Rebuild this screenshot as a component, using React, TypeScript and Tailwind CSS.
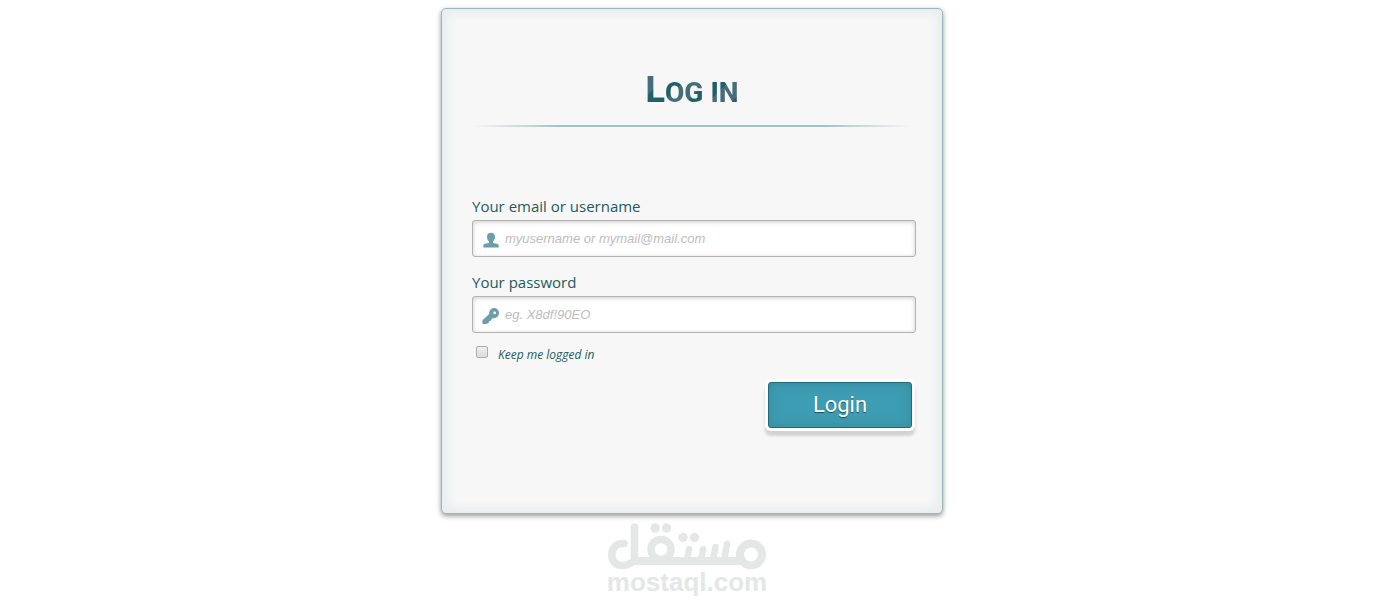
import React, { useState } from 'react';

const UserGlyph = () => (
  <svg viewBox="0 0 16 16" className="h-4 w-4" fill="#6c9dab" aria-hidden="true">
    <path d="M8 .8C5.500 .8 4 2.400 4 4.800C4 6.800 4.800 8.400 6 9.300V10.800C4.500 11.600 1 11.400 .3 13.200V15.500H15.700V13.200C15 11.400 11.500 11.600 10 10.800V9.300C11.200 8.400 12 6.800 12 4.800C12 2.400 10.500 .8 8 .8Z" />
  </svg>
);

const KeyGlyph = () => (
  <svg viewBox="0 0 18 18" className="h-[18px] w-[18px]" fill="#6c9dab" fillRule="evenodd" aria-hidden="true">
    <path d="M12 1A5 5 0 0 0 7.200 7L1 12.800C.3 13.500 .3 15 .6 17H4.600L6.600 15.800L7.200 14.200L9 13.500L9.800 11.600L11.500 11.200A5 5 0 0 0 17 6A5 5 0 0 0 12 1ZM12.700 4.400A1.400 1.400 0 1 1 12.700 7.200A1.400 1.400 0 0 1 12.700 4.400Z" />
  </svg>
);

const MostaqlMark = () => (
  <svg viewBox="0 0 158 48" className="h-12 w-[158px]" fill="none" stroke="#e4e7e6" strokeLinecap="round" strokeLinejoin="round" role="img" aria-label="مستقل">
    <path strokeWidth="7.500" d="M16 21.500C8.500 20.500 3.800 26.500 3.800 33C3.800 39.500 8.500 43.500 14.500 43.500C19.500 43.500 22.500 41 26.500 39" />
    <path strokeWidth="8" d="M26.500 39H132" />
    <path strokeWidth="7.500" d="M26.500 5V38" />
    <circle cx="53" cy="27.500" r="10" strokeWidth="7.500" />
    <circle cx="143" cy="32.500" r="11" strokeWidth="8" />
    <path strokeWidth="6.500" d="M81 27L79 38M95 27L93 38M107.500 25L105 38M119 22L116 38" />
    <g fill="#e4e7e6" stroke="none">
      <circle cx="47" cy="6" r="4.700" />
      <circle cx="58.500" cy="6" r="4.700" />
      <circle cx="75" cy="15.500" r="4.700" />
      <circle cx="86.500" cy="15.500" r="4.700" />
    </g>
  </svg>
);

interface FieldProps {
  id: string;
  label: string;
  type: string;
  placeholder: string;
  icon: React.ReactNode;
  value: string;
  onChange: (value: string) => void;
}

const Field: React.FC<FieldProps> = ({ id, label, type, placeholder, icon, value, onChange }) => (
  <div>
    <label htmlFor={id} className="mb-1 block text-[15px] leading-5 text-[#235a60]">
      {label}
    </label>
    <div className="relative">
      <span className="pointer-events-none absolute inset-y-0 left-2.5 flex w-[18px] items-center justify-center pt-0.5">
        {icon}
      </span>
      <input
        id={id}
        type={type}
        placeholder={placeholder}
        value={value}
        onChange={(e) => onChange(e.target.value)}
        className="block h-[37px] w-full rounded-[3px] border border-[#b2b2b2] bg-white pl-8 pr-2 font-['Liberation_Sans',Arial,sans-serif] text-[13px] text-[#4a4a4a] shadow-[inset_0_1px_4px_rgba(168,168,168,0.6)] outline-none placeholder:italic placeholder:text-[#bebcbc] focus:border-[#5ba6b8]"
      />
    </div>
  </div>
);

export default function App() {
  const [username, setUsername] = useState('');
  const [password, setPassword] = useState('');
  const [keep, setKeep] = useState(false);

  return (
    <main className="flex flex-col items-center bg-white pt-2 pr-2 pl-[18px] font-['Open_Sans',sans-serif]">
      <form
        onSubmit={(e) => e.preventDefault()}
        className="w-full max-w-[502px] rounded-[5px] border border-[#93b8be] bg-[#f7f7f7] pt-14 pr-[26px] pb-[85px] pl-[30px] shadow-[0_2px_5px_rgba(105,108,109,0.7),inset_0_0_8px_5px_rgba(208,223,226,0.4)]"
      >
        <header className="mb-[69px] pr-1 text-center">
          <h1 className="bg-[repeating-linear-gradient(-45deg,#215f69_0px,#215f69_16px,#446e7c_16px,#446e7c_32px)] bg-clip-text pb-1 font-[Roboto,sans-serif] text-[28px] leading-[56px] font-extrabold text-transparent uppercase">
            <span className="text-[36px] leading-none">L</span>og in
          </h1>
          <div className="h-0.5 bg-[linear-gradient(to_right,transparent,#a1c3c8_20%,#a1c3c8_80%,transparent)]" />
        </header>

        <div className="flex flex-col gap-[15px]">
          <Field
            id="username"
            label="Your email or username"
            type="text"
            placeholder="myusername or mymail@mail.com"
            icon={<UserGlyph />}
            value={username}
            onChange={setUsername}
          />
          <Field
            id="password"
            label="Your password"
            type="password"
            placeholder="eg. X8df!90EO"
            icon={<KeyGlyph />}
            value={password}
            onChange={setPassword}
          />
        </div>

        <div className="mt-[13px] flex items-start gap-2.5 pl-1">
          <input
            id="keep"
            type="checkbox"
            checked={keep}
            onChange={(e) => setKeep(e.target.checked)}
            className="h-3 w-3 appearance-none rounded-[2px] border border-[#acacac] bg-linear-to-b from-[#eeeeee] to-[#dcdcdc] checked:bg-none checked:bg-[#3d9db3]"
          />
          <label htmlFor="keep" className="text-[12px] leading-[18px] text-[#235a60] italic">
            Keep me logged in
          </label>
        </div>

        <div className="mt-[18px] flex justify-end pr-1">
          <button
            type="submit"
            className="h-[46px] w-36 cursor-pointer rounded-[3px] border border-[#1c6c7a] bg-[#3d9db3] font-[Roboto,sans-serif] text-[22px] leading-6 text-white shadow-[0_0_0_3px_#fff,0_5px_3px_3px_rgba(0,0,0,0.15),inset_0_0_12px_rgba(58,120,136,0.5)] [text-shadow:0_1px_1px_rgba(0,0,0,0.5)] hover:bg-[#4ab3c6]"
          >
            Login
          </button>
        </div>
      </form>

      <footer className="mt-2 flex flex-col items-center pr-2.5 pb-3">
        <MostaqlMark />
        <span className="font-['Liberation_Sans',Arial,sans-serif] text-[26px] leading-6 font-bold text-[#e4e7e6]">
          mostaql.com
        </span>
      </footer>
    </main>
  );
}
